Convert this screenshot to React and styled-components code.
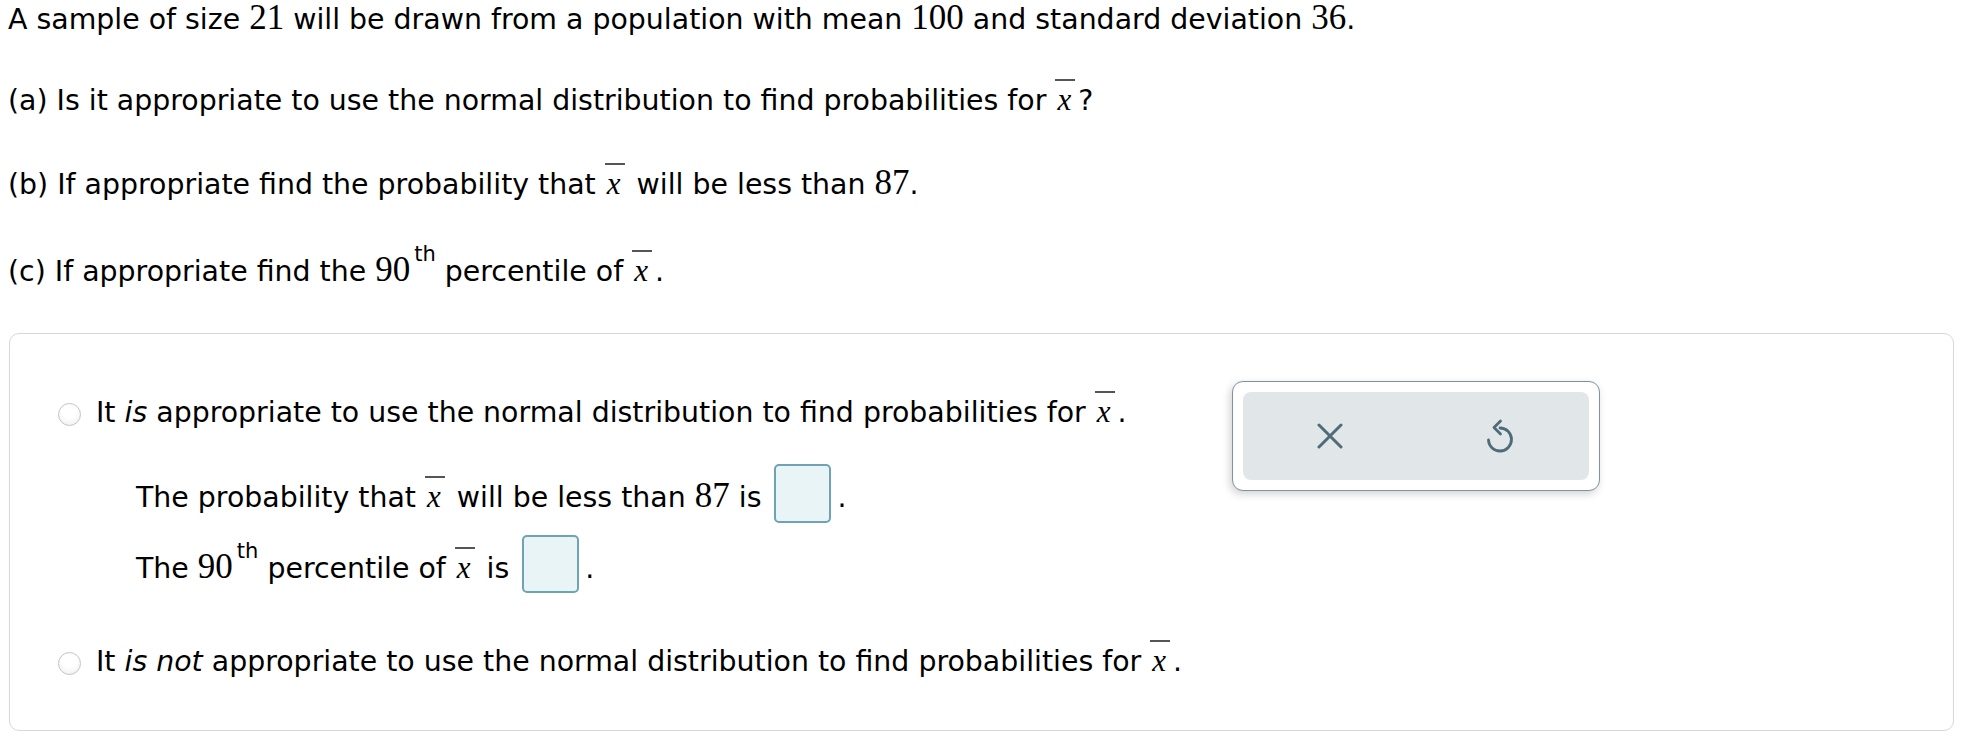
import React from 'react';
import styled, { createGlobalStyle } from 'styled-components';

const Global = createGlobalStyle`
  html, body { margin: 0; padding: 0; background: #fff; }
  body {
    font-family: "DejaVu Sans", Verdana, sans-serif;
    font-size: 28.4px;
    color: #000;
  }
`;

const Page = styled.div`
  padding: 0 14px 0 8px;
`;

const Line = styled.p`
  margin: ${p => p.$mt || 0}px 0 0 ${p => p.$ml || 0}px;
  line-height: 36px;
  white-space: nowrap;
`;

const Num = styled.span`
  font-family: "Liberation Serif", "Times New Roman", serif;
  font-size: 35px;
  line-height: 1;
`;

const XBar = styled.span`
  display: inline-block;
  font-family: "Liberation Serif", "Times New Roman", serif;
  font-style: italic;
  font-size: 31px;
  line-height: 31px;
  padding: 3px 4px 0 2px;
  margin-right: 3px;
  border-top: 2px solid #555;
`;

const Sup = styled.span`
  font-size: 21px;
  line-height: 1;
  vertical-align: 20px;
  margin-left: 4px;
`;

const Card = styled.div`
  margin: ${p => p.$mt}px 0 0 1px;
  border: 1px solid #d3d8dc;
  border-radius: 10px;
  padding: 47px 0 50px;
  display: grid;
  grid-template-columns: 1222px 368px;
  align-items: start;
`;

const Choices = styled.div`
  display: flex;
  flex-direction: column;
`;

const RadioRow = styled.div`
  display: flex;
  align-items: flex-start;
  gap: 15px;
  padding-left: 48px;
  margin-top: ${p => p.$mt}px;
  white-space: nowrap;
  line-height: 36px;
`;

const Radio = styled.span`
  flex: none;
  width: 23px;
  height: 23px;
  margin-top: 12px;
  box-sizing: border-box;
  border-radius: 50%;
  border: 1px solid #c4c4c4;
  background: radial-gradient(circle at 50% 35%, #ffffff 40%, #ececec 100%);
`;

const SubBlock = styled.div`
  padding-left: 126px;
`;

const AnswerBox = styled.span`
  display: inline-block;
  width: 57px;
  height: ${p => p.$h}px;
  box-sizing: border-box;
  vertical-align: ${p => -p.$drop}px;
  margin: 0 6px 0 4px;
  border: 2px solid #6da3b3;
  border-radius: 5px;
  background: #e9f4f7;
`;

const Panel = styled.div`
  width: 368px;
  height: 110px;
  box-sizing: border-box;
  border: 1.5px solid #7d949d;
  border-radius: 11px;
  background: #fff;
  padding: 10px;
  box-shadow: -2px 3px 8px rgba(0, 0, 0, 0.18);
`;

const PanelInner = styled.div`
  height: 100%;
  border-radius: 8px;
  background: #e1e6e9;
  display: grid;
  grid-template-columns: 1fr 1fr;
  align-items: center;
  justify-items: center;
`;

const IconButton = styled.button`
  border: none;
  background: transparent;
  padding: 0;
  display: flex;
  align-items: center;
  justify-content: center;
  color: #4f6b77;
  cursor: pointer;
  margin-left: ${p => p.$ml || 0}px;
`;

const X = () => (
  <XBar>x</XBar>
);

export default function App() {
  return (
    <>
      <Global />
      <Page>
        <Line>
          A sample of size <Num>21</Num> will be drawn from a population with mean <Num>100</Num> and standard deviation <Num>36</Num>.
        </Line>
        <Line $mt={41}>
          (a) Is it appropriate to use the normal distribution to find probabilities for <X />?
        </Line>
        <Line $mt={44}>
          (b) If appropriate find the probability that <X /> will be less than <Num>87</Num>.
        </Line>
        <Line $mt={41}>
          (c) If appropriate find the <Num>90</Num><Sup>th</Sup> percentile of <X />.
        </Line>

        <Card $mt={43}>
          <Choices>
            <RadioRow $mt={10}>
              <Radio />
              <span>It <i>is</i> appropriate to use the normal distribution to find probabilities for <X />.</span>
            </RadioRow>
            <SubBlock>
              <Line $mt={33}>
                The probability that <X /> will be less than <Num>87</Num> is <AnswerBox $h={59} $drop={16} />.
              </Line>
              <Line $mt={12}>
                The <Num>90</Num><Sup>th</Sup> percentile of <X /> is <AnswerBox $h={58} $drop={15} />.
              </Line>
            </SubBlock>
            <RadioRow $mt={47}>
              <Radio />
              <span>It <i>is not</i> appropriate to use the normal distribution to find probabilities for <X />.</span>
            </RadioRow>
          </Choices>

          <Panel>
            <PanelInner>
              <IconButton aria-label="clear" $ml={0}>
                <svg width="26" height="26" viewBox="0 0 26 26" fill="none" stroke="currentColor" strokeWidth="3" strokeLinecap="round">
                  <path d="M2 2 L24 24 M24 2 L2 24" />
                </svg>
              </IconButton>
              <IconButton aria-label="undo" $ml={-5}>
                <svg width="28" height="35" viewBox="0 0 28 35" fill="none" stroke="currentColor" strokeWidth="2.8" strokeLinecap="round" strokeLinejoin="round">
                  <path d="M14 9 A11.5 11.5 0 1 1 2.5 21" />
                  <path d="M14.5 2 L8 8.5 L14.5 15" />
                </svg>
              </IconButton>
            </PanelInner>
          </Panel>
        </Card>
      </Page>
    </>
  );
}
